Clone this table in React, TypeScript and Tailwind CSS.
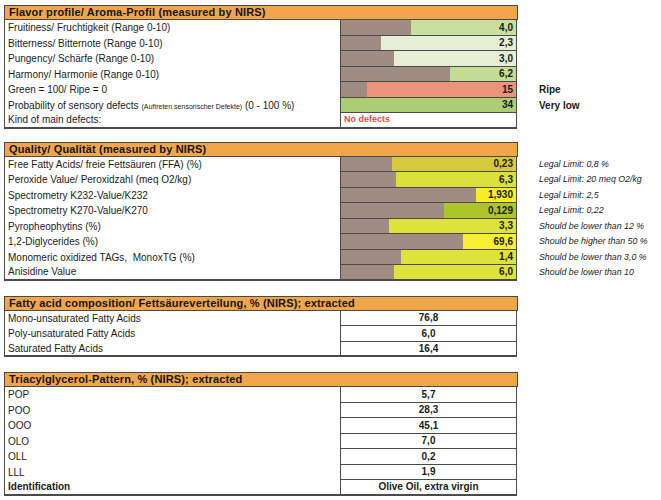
import React from 'react';

type RowProps = {
  label: React.ReactNode;
  value?: React.ReactNode;
  bg?: string;
  bar?: number;
  note?: React.ReactNode;
  noteClass?: string;
  center?: boolean;
  last?: boolean;
  labelClass?: string;
};

const Row: React.FC<RowProps> = ({ label, value, bg = 'bg-white', bar = 0, note, noteClass = '', center, last, labelClass = '' }) => (
  <div className="flex h-[15.5px]">
    <div
      className={`w-[337px] shrink-0 border-l border-r border-[#4a4a4a] pl-[3px] flex items-center text-[10px] text-[#1b1b1b] whitespace-pre ${last ? 'border-b-2' : ''} ${labelClass}`}
    >
      {label}
    </div>
    <div className={`w-[176px] shrink-0 border-r border-b border-[#4a4a4a] flex ${bg} ${last ? 'border-b-2' : ''}`}>
      {bar > 0 && <div className="bg-[#a08c82] h-full" style={{ width: `${bar}%` }} />}
      <div
        className={`flex-1 flex items-center text-[10px] font-bold text-[#1b1b1b] ${center ? 'justify-center' : 'justify-end pr-[3px]'}`}
      >
        {value}
      </div>
    </div>
    {note && <div className={`pl-[22px] flex items-center whitespace-nowrap text-[#1b1b1b] ${noteClass}`}>{note}</div>}
  </div>
);

const Header: React.FC<{ title: string }> = ({ title }) => (
  <div className="w-[514px] h-[15px] bg-[#f2a64c] border border-[#4a4a4a] pl-[4px] flex items-center text-[11px] font-bold tracking-[0.15px] text-[#151515] whitespace-nowrap">
    {title}
  </div>
);

const legal = 'italic text-[8.8px]';
const verdict = 'font-bold text-[10px]';

export default function App() {
  return (
    <div className="bg-white w-[661px] h-[500px] pl-[4px] pt-[5px] font-['Liberation_Sans',Arial,sans-serif] overflow-hidden">
      <section>
        <Header title="Flavor profile/ Aroma-Profil (measured by NIRS)" />
        <Row label="Fruitiness/ Fruchtigkeit (Range 0-10)" value="4,0" bg="bg-[#c9dfa0]" bar={40} />
        <Row label="Bitterness/ Bitternote (Range 0-10)" value="2,3" bg="bg-[#e6efd6]" bar={23} />
        <Row label="Pungency/ Schärfe (Range 0-10)" value="3,0" bg="bg-[#e6efd6]" bar={30} />
        <Row label="Harmony/ Harmonie (Range 0-10)" value="6,2" bg="bg-[#c3db93]" bar={62} />
        <Row label="Green = 100/ Ripe = 0" value="15" bg="bg-[#ec9479]" bar={15} note="Ripe" noteClass={verdict} />
        <Row
          label={
            <span>
              Probability of sensory defects <span className="text-[7px]">(Auftreten sensorischer Defekte)</span> (0 - 100 %)
            </span>
          }
          value="34"
          bg="bg-[#abcd74]"
          note="Very low"
          noteClass={verdict}
        />
        <Row
          label="Kind of main defects:"
          value={<span className="w-full pl-[3px] text-left text-[9px] text-[#ee4b3c]">No defects</span>}
          last
        />
      </section>

      <section className="mt-[13px]">
        <Header title="Quality/ Qualität (measured by NIRS)" />
        <Row label="Free Fatty Acids/ freie Fettsäuren (FFA) (%)" value="0,23" bg="bg-[#d6c93c]" bar={29} note="Legal Limit: 0,8 %" noteClass={legal} />
        <Row label="Peroxide Value/ Peroxidzahl (meq O2/kg)" value="6,3" bg="bg-[#d9e13a]" bar={31.5} note="Legal Limit: 20 meq O2/kg" noteClass={legal} />
        <Row label="Spectrometry K232-Value/K232" value="1,930" bg="bg-[#f8ee24]" bar={77} note="Legal Limit: 2,5" noteClass={legal} />
        <Row label="Spectrometry K270-Value/K270" value="0,129" bg="bg-[#abc52a]" bar={58.6} note="Legal Limit: 0,22" noteClass={legal} />
        <Row label="Pyropheophytins (%)" value="3,3" bg="bg-[#dde33a]" bar={27.5} note="Should be lower than 12 %" noteClass={legal} />
        <Row label="1,2-Diglycerides (%)" value="69,6" bg="bg-[#f6ee30]" bar={69.6} note="Should be higher than 50 %" noteClass={legal} />
        <Row label="Monomeric oxidized TAGs,  MonoxTG (%)" value="1,4" bg="bg-[#dde33a]" bar={34} note="Should be lower than 3,0 %" noteClass={legal} />
        <Row label="Anisidine Value" value="6,0" bg="bg-[#dde33a]" bar={30} note="Should be lower than 10" noteClass={legal} last />
      </section>

      <section className="mt-[15px]">
        <Header title="Fatty acid composition/ Fettsäureverteilung, % (NIRS); extracted" />
        <Row label="Mono-unsaturated Fatty Acids" value="76,8" center />
        <Row label="Poly-unsaturated Fatty Acids" value="6,0" center />
        <Row label="Saturated Fatty Acids" value="16,4" center last />
      </section>

      <section className="mt-[15px]">
        <Header title="Triacylglycerol-Pattern, % (NIRS); extracted" />
        <Row label="POP" value="5,7" center />
        <Row label="POO" value="28,3" center />
        <Row label="OOO" value="45,1" center />
        <Row label="OLO" value="7,0" center />
        <Row label="OLL" value="0,2" center />
        <Row label="LLL" value="1,9" center />
        <Row label="Identification" value="Olive Oil, extra virgin" center labelClass="font-bold" last />
      </section>
    </div>
  );
}
